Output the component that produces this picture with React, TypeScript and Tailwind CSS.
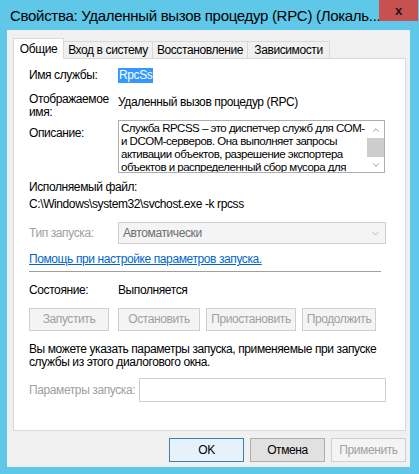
import { ChevronDown, ChevronUp } from 'lucide-react';

const font = { fontFamily: '"Liberation Sans", Arial, sans-serif' };

function Tab({ label, active, w }: { label: string; active?: boolean; w: string }) {
  return active ? (
    <div
      className={`${w} relative z-10 -mb-px flex h-[21px] items-center justify-center whitespace-nowrap border border-b-0 border-[#d9d9d9] bg-white text-[12px] text-black`}
    >
      {label}
    </div>
  ) : (
    <div
      className={`${w} mt-[3px] flex h-[17px] items-center justify-center whitespace-nowrap border border-l-0 border-b-0 border-[#d9d9d9] bg-[#f0f0f0] text-[12px] text-black`}
    >
      {label}
    </div>
  );
}

function Btn({ label, w, disabled, className = '' }: { label: string; w: string; disabled?: boolean; className?: string }) {
  return (
    <div
      className={`${w} ${className} flex h-[23px] items-center justify-center whitespace-nowrap border text-[12px] ${
        disabled ? 'border-[#cfcfcf] bg-[#f4f4f4] text-[#a0a0a0]' : 'border-[#adadad] bg-[#e1e1e1] text-black'
      }`}
    >
      {label}
    </div>
  );
}

export default function App() {
  return (
    <div className="flex h-[474px] w-[419px] flex-col overflow-hidden bg-[#5fc7e8] tracking-[-0.4px]" style={font}>
      {/* title bar */}
      <div className="flex h-[30px] items-start">
        <div className="mt-[6px] ml-[10px] flex-1 overflow-hidden whitespace-nowrap text-[15px] leading-[20px] tracking-[-0.3px] text-black">
          Свойства: Удаленный вызов процедур (RPC) (Локаль...
        </div>
        <div className="mr-px flex h-[21px] w-[39px] shrink-0 items-center justify-center bg-[#c75050] text-[13px] font-bold leading-none text-[#1a1a1a]">
          x
        </div>
      </div>

      <div className="ml-[7px] flex h-[437px] w-[403px] flex-col bg-[#f0f0f0] pl-[6px]">
        {/* tabs */}
        <div className="mt-[8px] flex h-[20px] items-start">
          <Tab label="Общие" active w="w-[51px]" />
          <Tab label="Вход в систему" w="w-[89px]" />
          <Tab label="Восстановление" w="w-[95px]" />
          <Tab label="Зависимости" w="w-[82px]" />
        </div>

        {/* panel */}
        <div className="flex h-[373px] w-[393px] flex-col border border-[#d9d9d9] bg-white pl-[15px] text-[12px] leading-[15px] text-black">
          <div className="mt-[9px] flex h-[15px]">
            <div className="w-[89px]">Имя службы:</div>
            <div className="bg-[#3399ff] px-px text-white">RpcSs</div>
          </div>

          <div className="mt-[10px] flex h-[26px]">
            <div className="w-[89px] leading-[13px]">
              Отображаемое
              <br />
              имя:
            </div>
            <div className="pt-[2px]">Удаленный вызов процедур (RPC)</div>
          </div>

          <div className="mt-[1px] flex h-[53px]">
            <div className="w-[89px] pt-[6px]">Описание:</div>
            <div className="flex w-[267px] border border-[#abadb3]">
              <div className="flex-1 overflow-hidden whitespace-nowrap pt-[1px] pl-[2px] text-[11.5px] leading-[13px] tracking-[-0.5px]">
                Служба RPCSS – это диспетчер служб для COM-
                <br />
                и DCOM-серверов. Она выполняет запросы
                <br />
                активации объектов, разрешение экспортера
                <br />
                объектов и распределенный сбор мусора для
              </div>
              <div className="flex w-[17px] shrink-0 flex-col bg-[#f0f0f0]">
                <div className="flex h-[17px] items-center justify-center bg-white">
                  <ChevronUp size={10} strokeWidth={1.5} className="text-[#606060]" />
                </div>
                <div className="h-[19px] bg-[#cdcdcd]" />
                <div className="flex-1" />
                <div className="flex h-[15px] items-center justify-center bg-white">
                  <ChevronDown size={10} strokeWidth={1.5} className="text-[#606060]" />
                </div>
              </div>
            </div>
          </div>

          <div className="mt-[7px]">Исполняемый файл:</div>
          <div className="mt-[2px]">C:\Windows\system32\svchost.exe -k rpcss</div>

          <div className="mt-[10px] flex h-[22px] items-center">
            <div className="w-[89px] text-[#a0a0a0]">Тип запуска:</div>
            <div className="flex h-[22px] w-[268px] items-center justify-between border border-[#cfcfcf] bg-[#f4f4f4] pr-[4px] pl-[4px] text-[#6d6d6d]">
              <span>Автоматически</span>
              <ChevronDown size={11} strokeWidth={1.5} className="text-[#a0a0a0]" />
            </div>
          </div>

          <div className="mt-[8px] text-[#0066cc] underline">Помощь при настройке параметров запуска.</div>

          <div className="mt-[4px] h-px w-[352px] bg-[#a0a0a0]" />

          <div className="mt-[11px] flex">
            <div className="w-[89px]">Состояние:</div>
            <div>Выполняется</div>
          </div>

          <div className="mt-[10px] flex">
            <Btn label="Запустить" w="w-[80px]" disabled />
            <Btn label="Остановить" w="w-[82px]" disabled className="ml-[9px]" />
            <Btn label="Приостановить" w="w-[90px]" disabled className="ml-[6px]" />
            <Btn label="Продолжить" w="w-[74px]" disabled className="ml-[6px]" />
          </div>

          <div className="mt-[12px] whitespace-nowrap leading-[13px]">
            Вы можете указать параметры запуска, применяемые при запуске
            <br />
            службы из этого диалогового окна.
          </div>

          <div className="mt-[9px] flex h-[24px] items-center">
            <div className="w-[110px] whitespace-nowrap text-[#a0a0a0]">Параметры запуска:</div>
            <div className="h-[24px] w-[247px] border border-[#cfcfcf] bg-white" />
          </div>
        </div>

        {/* bottom buttons */}
        <div className="mt-[7px] flex w-[393px] justify-end gap-[6px]">
          <div className="flex h-[24px] w-[75px] items-center justify-center border border-[#3c7fb1] bg-[#e5f1fb] text-[12px] text-black">
            OK
          </div>
          <div className="flex h-[24px] w-[75px] items-center justify-center border border-[#adadad] bg-[#e1e1e1] text-[12px] text-black">
            Отмена
          </div>
          <div className="flex h-[24px] w-[75px] items-center justify-center border border-[#cfcfcf] bg-[#f4f4f4] text-[12px] text-[#a0a0a0]">
            Применить
          </div>
        </div>
      </div>
    </div>
  );
}
